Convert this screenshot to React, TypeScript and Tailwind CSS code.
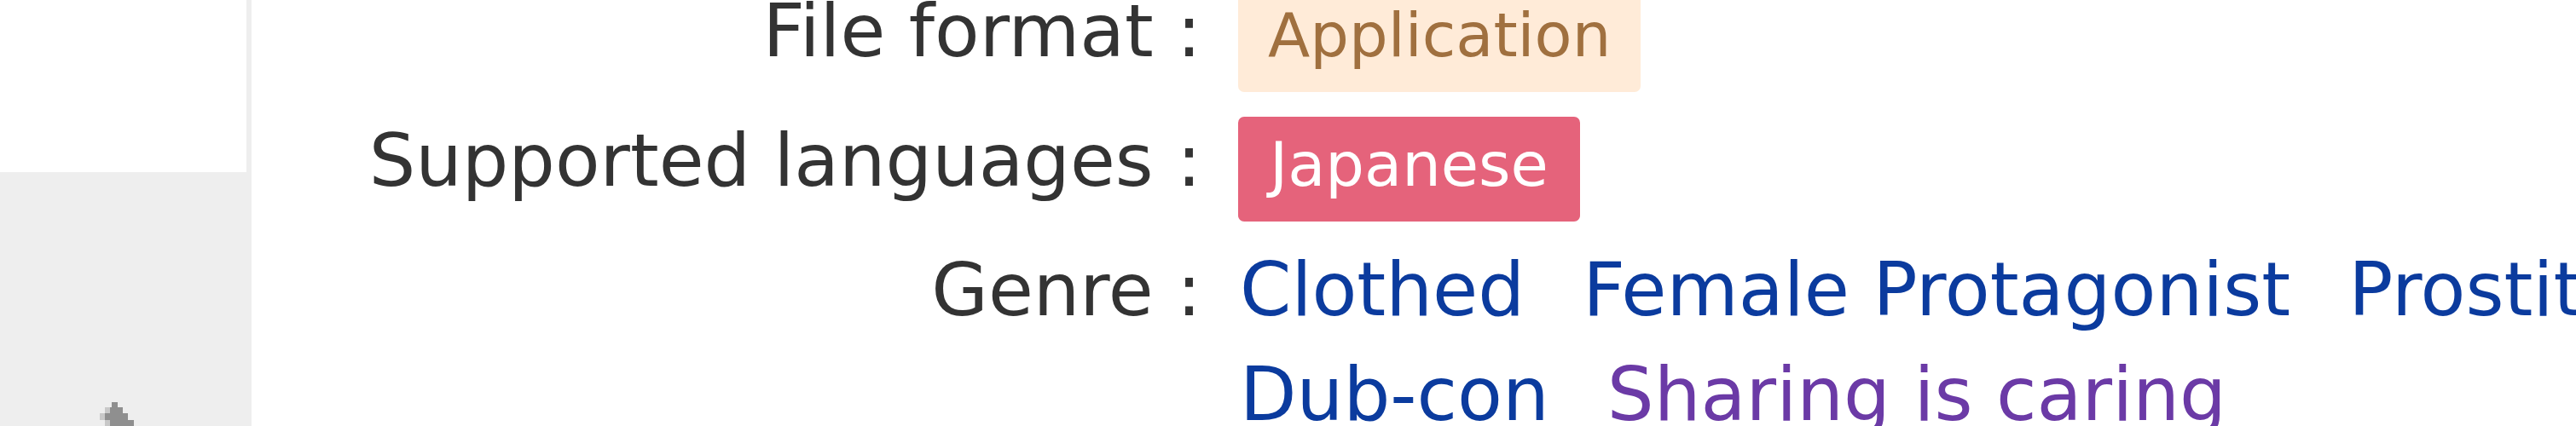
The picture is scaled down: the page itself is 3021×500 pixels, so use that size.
const font = { fontFamily: '"DejaVu Sans", Verdana, sans-serif' };

const genres = [
  { label: "Clothed", visited: false },
  { label: "Female Protagonist", visited: false },
  { label: "Prostitution", visited: false },
  { label: "Dub-con", visited: false },
  { label: "Sharing is caring", visited: true },
];

function Row({ label, leading, className, children }: { label: string; leading: string; className?: string; children: React.ReactNode }) {
  return (
    <div className={`flex items-baseline ${className ?? ""}`}>
      <div className={`w-[1114px] shrink-0 text-right text-[86px] text-[#333333] ${leading}`}>{label}</div>
      <div className="ml-[43px] w-[2000px] shrink-0">{children}</div>
    </div>
  );
}

export default function App() {
  return (
    <div className="flex h-[500px] w-full overflow-hidden bg-white" style={font}>
      <aside className="flex w-[295px] shrink-0 flex-col border-r-[6px] border-[#eeeeee]">
        <div className="h-[202px] bg-white" />
        <div className="relative flex-1 bg-[#eeeeee]">
          <svg className="absolute left-[112px] top-[270px] h-[28px] w-[50px]" viewBox="0 0 50 28">
            <path
              d="M19 0 L26 0 L26 6 L32 6 L32 13 L38 13 L38 21 L45 21 L45 28 L11 28 L11 21 L5 21 L5 13 L11 13 L11 6 L19 6 Z"
              fill="#c8c8c8"
            />
            <path d="M19 0 L26 0 L26 6 L32 6 L32 13 L38 13 L38 21 L45 21 L45 28 L17 28 L17 21 L11 21 L11 13 L17 13 L17 6 L19 6 Z" fill="#8f8f8f" />
          </svg>
        </div>
      </aside>

      <main className="-mt-[15px] shrink-0">
        <Row label="File format :" leading="leading-[103px]" className="mb-[29px]">
          <span className="inline-block rounded-[7px] bg-[#ffebd8] px-[35px] pb-[11px] text-[72px] leading-[112px] text-[#a0703f]">
            Application
          </span>
        </Row>

        <Row label="Supported languages :" leading="leading-[103px]" className="mb-[19px]">
          <span className="inline-block rounded-[7px] bg-[#e5637b] px-[37px] pb-[11px] text-[72px] leading-[112px] text-white">
            Japanese
          </span>
        </Row>

        <Row label="Genre :" leading="leading-[123px]">
          <div className="ml-[2px] flex flex-wrap gap-x-[68px] text-[86.5px] leading-[123px]">
            {genres.map((g) => (
              <a
                key={g.label}
                href="#"
                className={g.visited ? "text-[#6b3aa6]" : "text-[#0b3b9e]"}
              >
                {g.label}
              </a>
            ))}
          </div>
        </Row>
      </main>
    </div>
  );
}
